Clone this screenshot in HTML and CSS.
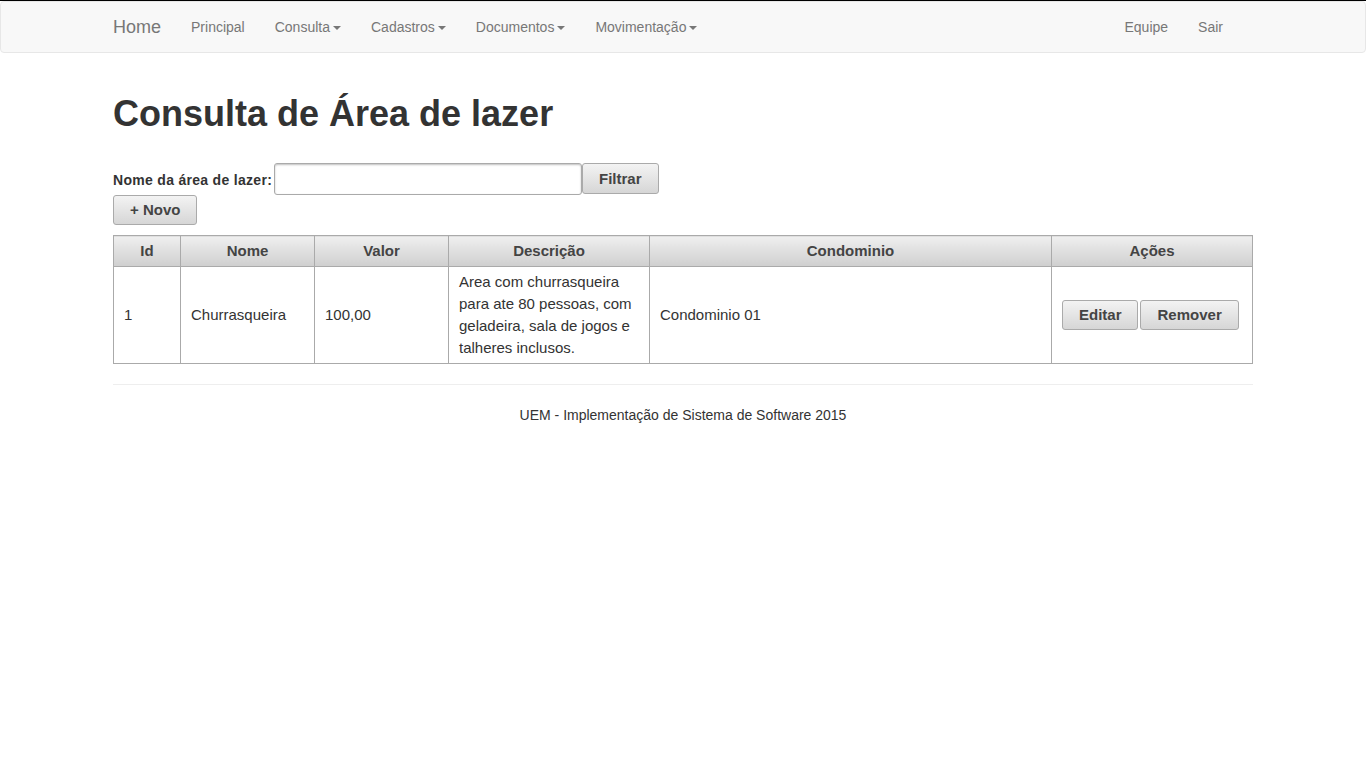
FILE: index.html
```html
<!DOCTYPE html>
<html lang="pt-BR">
<head>
<meta charset="utf-8">
<title>Consulta de Área de lazer</title>
<link rel="stylesheet" href="styles.css">
</head>
<body>
<nav class="navbar">
  <div class="container nav-inner">
    <div class="nav-left">
      <a class="brand" href="#">Home</a>
      <ul class="nav">
        <li><a href="#">Principal</a></li>
        <li><a href="#">Consulta<span class="caret"></span></a></li>
        <li><a href="#">Cadastros<span class="caret"></span></a></li>
        <li><a href="#">Documentos<span class="caret"></span></a></li>
        <li><a href="#">Movimentação<span class="caret"></span></a></li>
      </ul>
    </div>
    <ul class="nav nav-right">
      <li><a href="#">Equipe</a></li>
      <li><a href="#">Sair</a></li>
    </ul>
  </div>
</nav>

<main class="container">
  <h1 class="title">Consulta de Área de lazer</h1>
  <form class="filter">
    <div class="filter-row">
      <label class="filter-label" for="nome">Nome da área de lazer:</label>
      <input id="nome" class="filter-input" type="text">
      <button class="btn" type="button">Filtrar</button>
    </div>
    <div class="new-row">
      <button class="btn" type="button">+ Novo</button>
    </div>
  </form>

  <table class="grid">
    <colgroup>
      <col class="c-id"><col class="c-nome"><col class="c-valor"><col class="c-desc"><col class="c-cond"><col class="c-acoes">
    </colgroup>
    <thead>
      <tr><th>Id</th><th>Nome</th><th>Valor</th><th>Descrição</th><th>Condominio</th><th>Ações</th></tr>
    </thead>
    <tbody>
      <tr>
        <td>1</td>
        <td>Churrasqueira</td>
        <td>100,00</td>
        <td>Area com churrasqueira para ate 80 pessoas, com geladeira, sala de jogos e talheres inclusos.</td>
        <td>Condominio 01</td>
        <td><div class="actions"><button class="btn btn-edit" type="button">Editar</button><button class="btn btn-remove" type="button">Remover</button></div></td>
      </tr>
    </tbody>
  </table>

  <footer class="footer">
    <p>UEM - Implementação de Sistema de Software 2015</p>
  </footer>
</main>
</body>
</html>
```
FILE: styles.css
```css
* { box-sizing: border-box; }
html, body { margin: 0; padding: 0; }
body {
  font-family: "Liberation Sans", Arial, Helvetica, sans-serif;
  font-size: 14px;
  line-height: 20px;
  color: #333;
  background: #fff;
  border-top: 1px solid #000;
}
a { text-decoration: none; }
.container {
  width: 1170px;
  margin: 0 auto;
  padding: 0 15px;
}
.navbar {
  background: #f8f8f8;
  border: 1px solid #e7e7e7;
  border-radius: 4px;
  height: 52px;
}
.nav-inner {
  display: flex;
  justify-content: space-between;
  align-items: stretch;
  height: 50px;
}
.nav-left { display: flex; align-items: stretch; }
.brand {
  font-size: 18px;
  line-height: 20px;
  padding: 15px 15px;
  margin-left: -15px;
  color: #777;
  height: 50px;
}
.nav {
  list-style: none;
  margin: 0;
  padding: 0;
  display: flex;
}
.nav a {
  display: block;
  padding: 15px 15px;
  color: #777;
  font-size: 14px;
  line-height: 20px;
}
.nav-right { margin-right: 15px; }
.caret {
  display: inline-block;
  width: 0;
  height: 0;
  margin-left: 3px;
  vertical-align: middle;
  border-top: 4px solid #777;
  border-left: 4px solid transparent;
  border-right: 4px solid transparent;
}
.title {
  font-size: 36px;
  line-height: 40px;
  font-weight: bold;
  margin: 41px 0 29px;
  color: #333;
}
.filter { margin: 0; }
.filter-row {
  display: flex;
  align-items: center;
  height: 32px;
}
.filter-label {
  font-weight: bold;
  font-size: 14px;
  padding-top: 1px;
  min-width: 161px;
  letter-spacing: 0.3px;
}
.filter-input {
  width: 308px;
  height: 32px;
  border: 1px solid #aaa;
  border-radius: 3px;
  box-shadow: inset 0 1px 2px rgba(0,0,0,0.25);
  font-family: inherit;
  font-size: 14px;
  padding: 4px 6px;
  margin: 0;
}
.btn {
  font-family: "Liberation Sans", Arial, Helvetica, sans-serif;
  font-size: 15px;
  font-weight: bold;
  line-height: 20px;
  color: #444;
  padding: 4px 15px;
  border: 1px solid #aaa;
  border-radius: 3px;
  background: linear-gradient(to bottom, #f3f3f3 0%, #d6d6d6 100%);
  margin: 0;
  cursor: pointer;
}
.filter-row .btn { height: 31px; padding: 4px 16px; margin-top: -1px; }
.new-row { margin-top: 0; height: 30px; }
.new-row .btn { padding: 4px 16px; height: 30px; }
.grid {
  width: 1139px;
  border-collapse: collapse;
  table-layout: fixed;
  margin-top: 10px;
  font-size: 15px;
  line-height: 22px;
}
.c-id { width: 67px; }
.c-nome { width: 134px; }
.c-valor { width: 134px; }
.c-desc { width: 201px; }
.c-cond { width: 402px; }
.c-acoes { width: 201px; }
.grid th, .grid td {
  border: 1px solid #aaa;
  padding: 4px 10px;
  vertical-align: middle;
}
.grid th {
  font-weight: bold;
  color: #444;
  text-align: center;
  background: linear-gradient(to bottom, #efefef 0%, #cfcfcf 100%);
}
.grid td { text-align: left; color: #333; }
.actions { display: flex; gap: 2px; }
.actions .btn-edit { padding: 4px 15px 4px 16px; }
.actions .btn-remove { padding: 4px 16px 4px 17px; }
.footer {
  margin-top: 20px;
  border-top: 1px solid #eee;
  text-align: center;
  padding-top: 20px;
}
.footer p { margin: 0; font-size: 14px; line-height: 20px; }
```
